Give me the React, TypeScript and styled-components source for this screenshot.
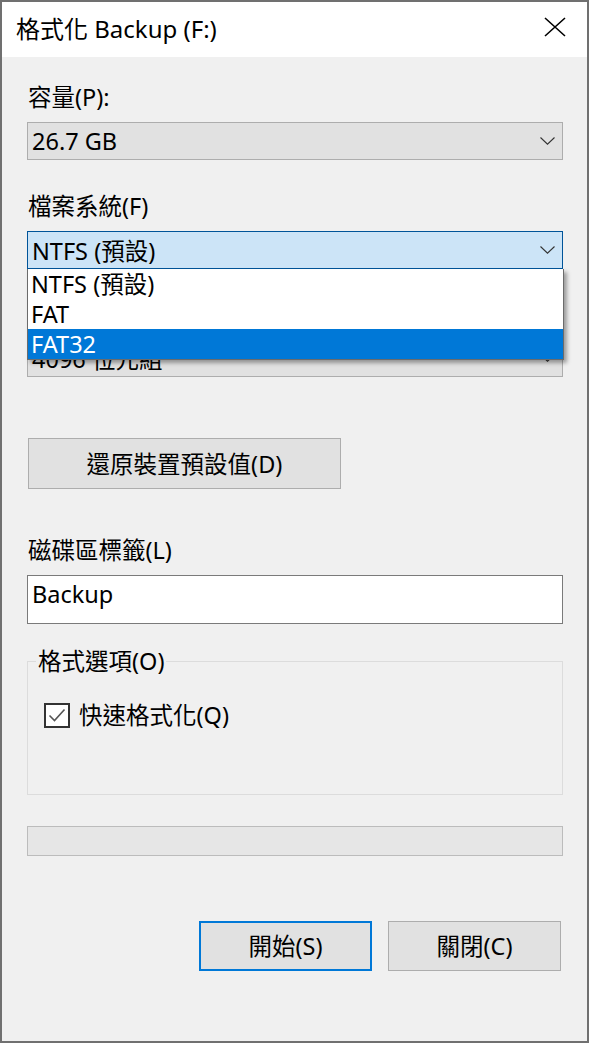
import React from "react";
import styled, { createGlobalStyle } from "styled-components";

const Global = createGlobalStyle`
  html, body { margin: 0; padding: 0; background: #f0f0f0; }
  body { font-family: "Noto Sans", "Noto Sans CJK TC", sans-serif; color: #000; }
  * { box-sizing: border-box; }
`;

const Dialog = styled.div`
  width: 589px;
  height: 1043px;
  border: 2px solid #707070;
  background: #f0f0f0;
  display: flex;
  flex-direction: column;
  overflow: hidden;
`;

const TitleBar = styled.div`
  height: 55px;
  flex: none;
  background: #fff;
  display: flex;
  align-items: center;
  justify-content: space-between;
  padding: 0 21px 5px 14px;
  font-size: 24px;
`;

const Body = styled.div`
  display: flex;
  flex-direction: column;
  padding: 0 24px 0 25px;
`;

const Label = styled.div<{ $mt: number }>`
  margin-top: ${(p) => p.$mt}px;
  margin-bottom: 11px;
  padding-left: 1px;
  font-size: 23.5px;
  line-height: 28px;
  height: 28px;
  white-space: nowrap;
`;

const ComboWrap = styled.div`
  position: relative;
`;

const Combo = styled.div<{ $focused?: boolean }>`
  height: 38px;
  border: 1px solid ${(p) => (p.$focused ? "#005499" : "#adadad")};
  background: ${(p) => (p.$focused ? "#cce4f7" : "#e1e1e1")};
  display: flex;
  align-items: center;
  justify-content: space-between;
  padding: 0 7px 0 4px;
  font-size: 23.5px;
  white-space: nowrap;
`;

const DropList = styled.div`
  position: absolute;
  top: 100%;
  left: 0;
  width: 537px;
  background: #fff;
  border: 1px solid #6b6b6b;
  border-top: none;
  box-shadow: 3px 3px 4px rgba(0, 0, 0, 0.35);
  z-index: 5;
`;

const DropItem = styled.div<{ $selected?: boolean }>`
  height: 30px;
  line-height: 30px;
  padding-left: 3px;
  font-size: 23.5px;
  background: ${(p) => (p.$selected ? "#0078d7" : "#fff")};
  color: ${(p) => (p.$selected ? "#fff" : "#000")};
`;

const Button = styled.button<{ $primary?: boolean }>`
  font-family: inherit;
  font-size: 23.5px;
  color: #000;
  background: #e1e1e1;
  border: ${(p) => (p.$primary ? "2px solid #0078d7" : "1px solid #adadad")};
  padding: 0 0 2px 0;
  display: flex;
  align-items: center;
  justify-content: center;
  white-space: nowrap;
`;

const ResetButton = styled(Button)`
  margin-top: 61px;
  margin-left: 1px;
  width: 313px;
  height: 51px;
`;

const TextBox = styled.div`
  height: 49px;
  border: 1px solid #7a7a7a;
  background: #fff;
  font-size: 23.5px;
  line-height: 30px;
  padding: 3px 4px;
`;

const Group = styled.fieldset`
  margin: 23px 0 0 0;
  height: 148px;
  border: 1px solid #dcdcdc;
  padding: 0 8px;
  min-width: 0;
`;

const Legend = styled.legend`
  font-size: 23.5px;
  line-height: 28px;
  padding: 0 2px;
`;

const CheckRow = styled.div`
  display: flex;
  align-items: center;
  gap: 9px;
  margin-top: 26px;
  margin-left: 8px;
  font-size: 23.5px;
  line-height: 28px;
`;

const CheckBox = styled.div`
  width: 26px;
  height: 25px;
  border: 2px solid #333;
  background: #fff;
  display: flex;
  align-items: center;
  justify-content: center;
`;

const Progress = styled.div`
  margin-top: 31px;
  height: 30px;
  border: 1px solid #bcbcbc;
  background: #e6e6e6;
`;

const ButtonRow = styled.div`
  margin-top: 65px;
  margin-right: 2px;
  display: flex;
  justify-content: flex-end;
  gap: 16px;
`;

const DialogButton = styled(Button)`
  width: 173px;
  height: 50px;
`;

const Chevron = () => (
  <svg width="15" height="8" viewBox="0 0 15 8">
    <path d="M0.5 0.5 L7.5 7.2 L14.5 0.5" fill="none" stroke="#333" strokeWidth="1.1" />
  </svg>
);

const CloseIcon = () => (
  <svg width="22" height="20" viewBox="0 0 22 20">
    <path d="M1 1 L21 19 M21 1 L1 19" fill="none" stroke="#000" strokeWidth="1.6" />
  </svg>
);

const CheckMark = () => (
  <svg width="20" height="18" viewBox="0 0 20 18">
    <path d="M2.5 9.5 L7.5 14.5 L17.5 3.5" fill="none" stroke="#555" strokeWidth="1.6" />
  </svg>
);

export default function App() {
  return (
    <>
      <Global />
      <Dialog>
        <TitleBar>
          <span>格式化 Backup (F:)</span>
          <CloseIcon />
        </TitleBar>
        <Body>
          <Label $mt={26}>容量(P):</Label>
          <Combo>
            <span>26.7 GB</span>
            <Chevron />
          </Combo>

          <Label $mt={32}>檔案系統(F)</Label>
          <ComboWrap>
            <Combo $focused>
              <span>NTFS (預設)</span>
              <Chevron />
            </Combo>
            <DropList>
              <DropItem>NTFS (預設)</DropItem>
              <DropItem>FAT</DropItem>
              <DropItem $selected>FAT32</DropItem>
            </DropList>
          </ComboWrap>

          <Label $mt={31}>配置單位大小(A)</Label>
          <Combo>
            <span>4096 位元組</span>
            <Chevron />
          </Combo>

          <ResetButton>還原裝置預設值(D)</ResetButton>

          <Label $mt={47}>磁碟區標籤(L)</Label>
          <TextBox>Backup</TextBox>

          <Group>
            <Legend>格式選項(O)</Legend>
            <CheckRow>
              <CheckBox>
                <CheckMark />
              </CheckBox>
              <span>快速格式化(Q)</span>
            </CheckRow>
          </Group>

          <Progress />

          <ButtonRow>
            <DialogButton $primary>開始(S)</DialogButton>
            <DialogButton>關閉(C)</DialogButton>
          </ButtonRow>
        </Body>
      </Dialog>
    </>
  );
}
